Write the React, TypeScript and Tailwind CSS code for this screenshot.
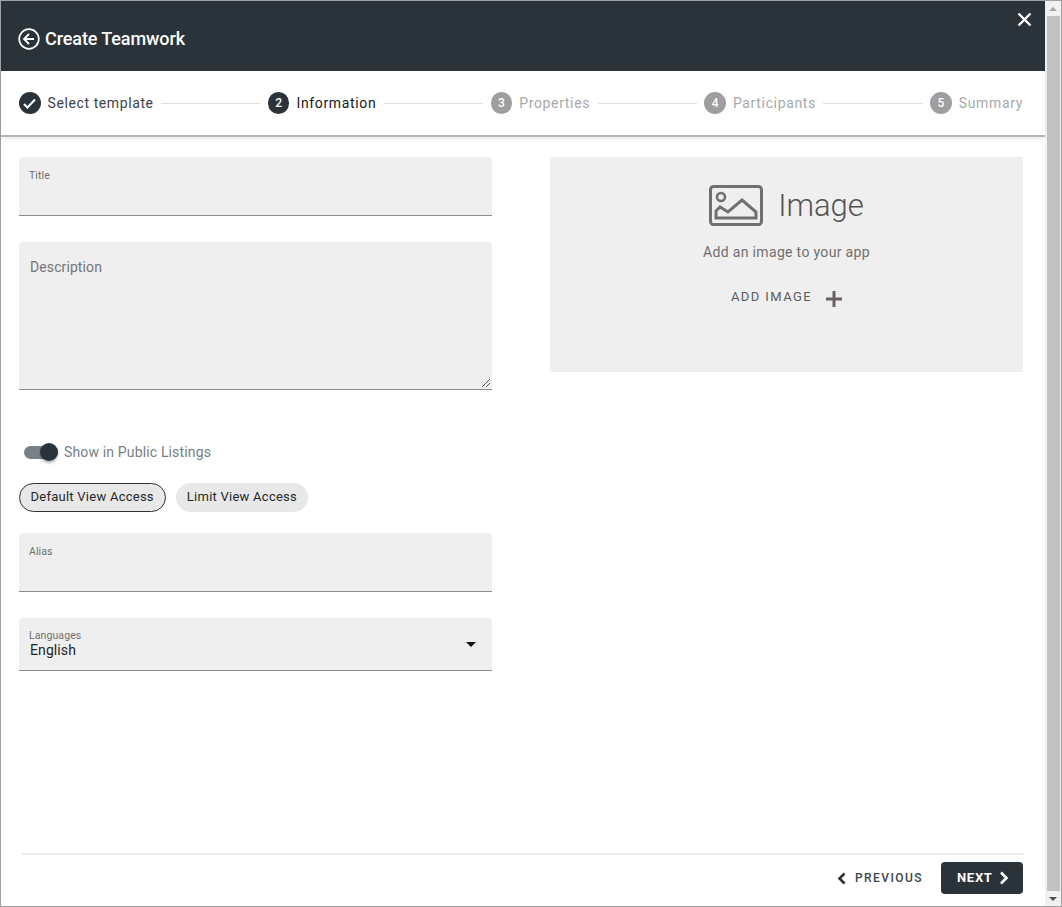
import { Fragment } from "react";

const steps = [
  { label: "Select template", state: "done", num: "" },
  { label: "Information", state: "active", num: "2" },
  { label: "Properties", state: "todo", num: "3" },
  { label: "Participants", state: "todo", num: "4" },
  { label: "Summary", state: "todo", num: "5" },
];

const Stepper = () => (
  <div className="relative flex h-[66px] items-center border-b-2 border-[#b4b4b4] pl-[18px] pr-[22px] shadow-[0_2px_4px_rgba(0,0,0,0.08)]">
    {steps.map((step, i) => (
      <Fragment key={step.label}>
        {i > 0 && <div className="mx-[7.5px] h-px flex-1 bg-[#dfdfdf]" />}
        <div
          className={
            step.state === "todo"
              ? "flex h-[21.5px] w-[21.5px] items-center justify-center rounded-full bg-[#9e9e9e] text-xs font-medium text-white"
              : "flex h-[21.5px] w-[21.5px] items-center justify-center rounded-full bg-[#2b333a] text-xs font-medium text-white"
          }
        >
          {step.state === "done" ? (
            <svg width="15" height="15" viewBox="0 0 15 15" fill="none">
              <path d="M2 8l3.5 3.5L13 3.5" stroke="white" strokeWidth="2" />
            </svg>
          ) : (
            step.num
          )}
        </div>
        <span
          className={
            step.state === "todo"
              ? "ml-[7px] text-sm tracking-[0.65px] text-[#a8a8a8]"
              : step.state === "active"
                ? "ml-[7px] text-sm tracking-[0.65px] text-[#17191b]"
                : "ml-[7px] text-sm tracking-[0.6px] text-[#3c4249]"
          }
        >
          {step.label}
        </span>
      </Fragment>
    ))}
  </div>
);

const Field = ({ label, className }: { label: string; className: string }) => (
  <div className={`rounded-t border-b border-[#8c8c8c] bg-[#efefef] px-[10px] ${className}`}>
    <div className="text-[10.5px] leading-3 tracking-[0.1px] text-[#6f6f6f]">{label}</div>
  </div>
);

export default function App() {
  return (
    <div className="flex h-[907px] w-[1062px] border border-[#a0a0a0] bg-white font-['Roboto',sans-serif]">
      <div className="flex min-w-0 flex-1 flex-col">
        <div className="flex h-[70px] items-start justify-between bg-[#2b333a] pl-[17px] pr-[13px] text-white">
          <div className="mt-[26px] flex items-center">
            <svg width="22" height="22" viewBox="0 0 22 22" fill="none" stroke="white">
              <circle cx="11" cy="11" r="9.8" strokeWidth="1.7" />
              <path d="M11 6l-5 5 5 5M6 11h10" strokeWidth="1.8" />
            </svg>
            <span className="ml-[5px] text-lg font-medium leading-6 tracking-[-0.1px]">Create Teamwork</span>
          </div>
          <svg className="mt-[11px]" width="15" height="15" viewBox="0 0 15 15" stroke="white" strokeWidth="2.4">
            <path d="M1.5 1.5l12 12M13.5 1.5l-12 12" />
          </svg>
        </div>

        <Stepper />

        <div className="flex flex-1 justify-between pl-[18px] pr-[22px] pt-5">
          <div className="flex w-[473px] flex-col">
            <Field label="Title" className="h-[59px] pt-[13px]" />
            <div className="relative mt-[26px] h-[148px] rounded-t border-b border-[#8c8c8c] bg-[#efefef] pl-[11px] pr-[10px] pt-4">
              <div className="text-sm leading-[18px] tracking-[0.1px] text-[#757575]">Description</div>
              <svg className="absolute bottom-[1px] right-[1px]" width="10" height="10" viewBox="0 0 10 10" stroke="#555">
                <path d="M1 9l8-8M5 9l4-4" />
              </svg>
            </div>
            <div className="mt-[51px] flex h-[22px] items-center pl-[5px]">
              <div className="relative h-[13px] w-[34px] rounded-full bg-[#7b8084]">
                <div className="absolute -top-[3px] right-0 h-[18px] w-[18px] rounded-full bg-[#2b333a] shadow-[0_2px_3px_rgba(0,0,0,0.3)]" />
              </div>
              <span className="ml-[6px] text-sm tracking-[0.15px] text-[#757f87]">Show in Public Listings</span>
            </div>
            <div className="mt-[20px] flex gap-[10px]">
              <div className="flex h-[29px] items-center rounded-full border border-[#2b333a] bg-[#e8e8e8] pb-[1px] pl-[10.5px] pr-[11px] text-[13px] tracking-[0.25px] text-[#25282b]">
                Default View Access
              </div>
              <div className="flex h-[29px] items-center rounded-full bg-[#e8e8e8] px-[11px] pb-[1px] text-[13px] tracking-[0.25px] text-[#25282b]">
                Limit View Access
              </div>
            </div>
            <Field label="Alias" className="mt-[21px] h-[59px] pt-[13px]" />
            <div className="mt-[26px] flex h-[53px] items-center justify-between rounded-t border-b border-[#8c8c8c] bg-[#efefef] pl-[10px] pr-[16px]">
              <div className="pb-[1px]">
                <div className="pt-[1px] text-[10.5px] leading-3 tracking-[0.1px] text-[#6f6f6f]">Languages</div>
                <div className="-mt-[1px] pl-[1px] text-sm leading-[18px] tracking-[0.1px] text-[#1f1f1f]">English</div>
              </div>
              <div className="h-0 w-0 border-x-[5px] border-t-[5px] border-x-transparent border-t-[#111]" />
            </div>
          </div>

          <div className="flex h-[215px] w-[473px] flex-col items-center bg-[#efefef] pt-7 text-[#5f5f5f]">
            <div className="flex items-center">
              <svg width="54" height="41" viewBox="0 0 54 41" fill="none" stroke="#707070" strokeWidth="3">
                <rect x="1.5" y="1.5" width="51" height="38" rx="3" />
                <circle cx="12" cy="12" r="4" strokeWidth="2.6" />
                <path d="M7 33v-7l4-4 8 5 14-12 14 12v6z" strokeWidth="3" />
              </svg>
              <span className="ml-[15px] text-[31px] font-light leading-10 text-[#555]">Image</span>
            </div>
            <div className="mt-4 text-sm tracking-[0.33px] text-[#6f6f6f]">Add an image to your app</div>
            <div className="mt-[25px] flex items-center">
              <span className="text-[13px] tracking-[1.4px] text-[#5c5c5c]">ADD IMAGE</span>
              <svg className="ml-[14px] mt-1" width="16" height="16" viewBox="0 0 16 16" stroke="#6b5f66" strokeWidth="3">
                <path d="M0 8h16M8 0v16" />
              </svg>
            </div>
          </div>
        </div>

        <div className="mx-[21px] h-[2px] bg-[#ececec]" />
        <div className="flex h-[51px] items-start justify-end pl-[18px] pr-[22px] pt-[7px]">
          <div className="flex h-[32px] items-center">
            <svg width="9" height="13" viewBox="0 0 9 13" fill="none" stroke="#2b333a" strokeWidth="2.6">
              <path d="M7.5 1.5l-5 5 5 5" />
            </svg>
            <span className="ml-[9px] text-xs font-medium tracking-[1.45px] text-[#3d454c]">PREVIOUS</span>
          </div>
          <div className="ml-[18px] flex h-[32px] w-[82px] items-center rounded bg-[#2b333a] pl-4 text-white">
            <span className="text-[13px] font-bold tracking-[0.7px]">NEXT</span>
            <svg className="ml-[6px]" width="10" height="14" viewBox="0 0 10 14" fill="none" stroke="white" strokeWidth="2.6">
              <path d="M2 1.5l5.5 5.5-5.5 5.5" />
            </svg>
          </div>
        </div>
      </div>

      <div className="flex w-[16px] flex-col items-center bg-[#f1f1f1] text-[#505050]">
        <div className="flex h-[15px] items-center">
          <div className="h-0 w-0 border-x-[4px] border-b-[4px] border-x-transparent border-b-[#a3a3a3]" />
        </div>
        <div className="h-[875px] w-[13px] bg-[#c1c1c1]" />
        <div className="mt-auto flex h-[15px] items-center">
          <div className="h-0 w-0 border-x-[4px] border-t-[4px] border-x-transparent border-t-[#505050]" />
        </div>
      </div>
    </div>
  );
}
